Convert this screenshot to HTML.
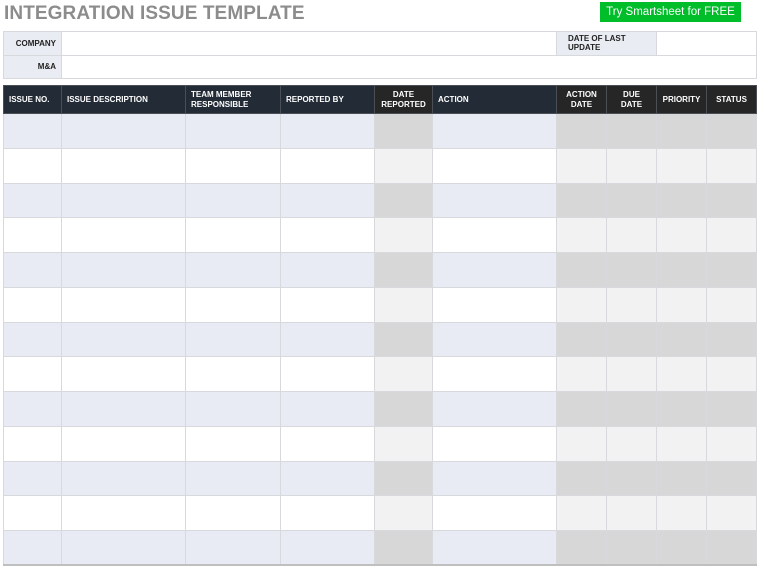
<!DOCTYPE html>
<html><head><meta charset="utf-8"><style>
*{margin:0;padding:0;box-sizing:border-box}
body{width:759px;height:568px;background:#fff;font-family:"Liberation Sans",Arial,sans-serif;position:relative;overflow:hidden}
.title{position:absolute;left:4px;top:3px;font-size:19px;font-weight:bold;color:#8c8c8c;letter-spacing:0.1px}
.btn{position:absolute;left:600px;top:2px;width:141px;height:20px;background:#00bd2a;color:#fff;font-size:11.5px;text-align:center;line-height:20px}
table{border-collapse:collapse;table-layout:fixed;position:absolute;left:3px}
td{border:1px solid #d8d9dc;font-size:8px;font-weight:bold;color:#222}
.top{top:31px;width:753px}
.top tr{height:23.5px}
.top .lab{background:#e9ecf3;text-align:right;padding-right:5px}
.top .lab2{background:#e9ecf3;text-align:left;padding-left:11px}
.main{top:85px;width:753px}
.main tr.h td{height:28px;background:#222b36;color:#fff;border:1px solid #4a4f55;padding-left:5px;line-height:10px}
.main tr.h td.c{text-align:center;padding-left:0}
.main tr.h td.k{background:#262626}
.main tr.d td{height:34.77px}
tr.a td{background:#e8ebf3}
tr.a td.g{background:#d7d7d7}
tr.b td{background:#fff}
tr.b td.g{background:#f2f2f2}
.main{border-bottom:2px solid #bfbfbf}
</style></head><body>
<div class="title">INTEGRATION ISSUE TEMPLATE</div>
<div class="btn">Try Smartsheet for FREE</div>
<table class="top">
<colgroup><col style="width:58px"><col style="width:495px"><col style="width:100px"><col style="width:100px"></colgroup>
<tr><td class="lab">COMPANY</td><td></td><td class="lab2">DATE OF LAST UPDATE</td><td></td></tr>
<tr><td class="lab">M&amp;A</td><td colspan="3"></td></tr>
</table>
<table class="main">
<colgroup><col style="width:58px"><col style="width:124px"><col style="width:95px"><col style="width:94px"><col style="width:58px"><col style="width:124px"><col style="width:50px"><col style="width:50px"><col style="width:50px"><col style="width:50px"></colgroup>
<tr class="h"><td>ISSUE NO.</td><td>ISSUE DESCRIPTION</td><td>TEAM MEMBER<br>RESPONSIBLE</td><td>REPORTED BY</td><td class="c k">DATE<br>REPORTED</td><td>ACTION</td><td class="c k">ACTION<br>DATE</td><td class="c k">DUE<br>DATE</td><td class="c k">PRIORITY</td><td class="c k">STATUS</td></tr>
<tr class="d a"><td></td><td></td><td></td><td></td><td class="g"></td><td></td><td class="g"></td><td class="g"></td><td class="g"></td><td class="g"></td></tr>
<tr class="d b"><td></td><td></td><td></td><td></td><td class="g"></td><td></td><td class="g"></td><td class="g"></td><td class="g"></td><td class="g"></td></tr>
<tr class="d a"><td></td><td></td><td></td><td></td><td class="g"></td><td></td><td class="g"></td><td class="g"></td><td class="g"></td><td class="g"></td></tr>
<tr class="d b"><td></td><td></td><td></td><td></td><td class="g"></td><td></td><td class="g"></td><td class="g"></td><td class="g"></td><td class="g"></td></tr>
<tr class="d a"><td></td><td></td><td></td><td></td><td class="g"></td><td></td><td class="g"></td><td class="g"></td><td class="g"></td><td class="g"></td></tr>
<tr class="d b"><td></td><td></td><td></td><td></td><td class="g"></td><td></td><td class="g"></td><td class="g"></td><td class="g"></td><td class="g"></td></tr>
<tr class="d a"><td></td><td></td><td></td><td></td><td class="g"></td><td></td><td class="g"></td><td class="g"></td><td class="g"></td><td class="g"></td></tr>
<tr class="d b"><td></td><td></td><td></td><td></td><td class="g"></td><td></td><td class="g"></td><td class="g"></td><td class="g"></td><td class="g"></td></tr>
<tr class="d a"><td></td><td></td><td></td><td></td><td class="g"></td><td></td><td class="g"></td><td class="g"></td><td class="g"></td><td class="g"></td></tr>
<tr class="d b"><td></td><td></td><td></td><td></td><td class="g"></td><td></td><td class="g"></td><td class="g"></td><td class="g"></td><td class="g"></td></tr>
<tr class="d a"><td></td><td></td><td></td><td></td><td class="g"></td><td></td><td class="g"></td><td class="g"></td><td class="g"></td><td class="g"></td></tr>
<tr class="d b"><td></td><td></td><td></td><td></td><td class="g"></td><td></td><td class="g"></td><td class="g"></td><td class="g"></td><td class="g"></td></tr>
<tr class="d a"><td></td><td></td><td></td><td></td><td class="g"></td><td></td><td class="g"></td><td class="g"></td><td class="g"></td><td class="g"></td></tr>
</table>
</body></html>
